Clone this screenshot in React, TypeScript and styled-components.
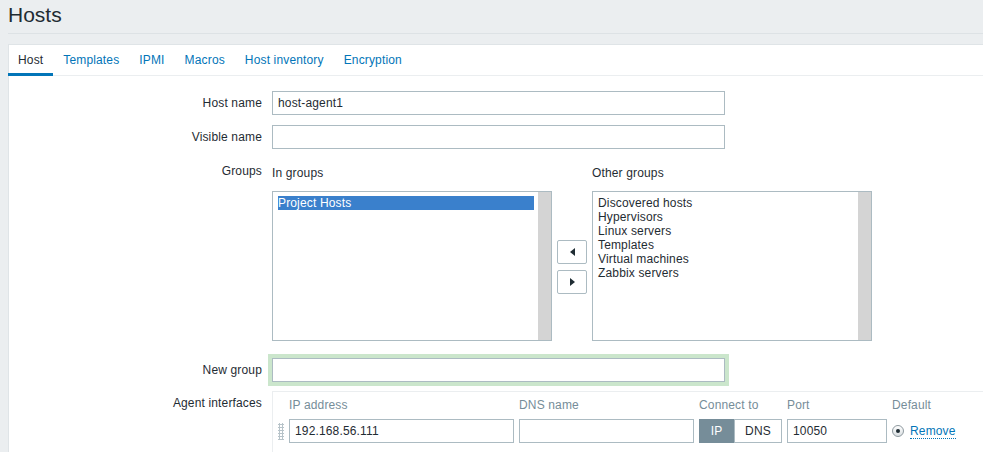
import React from "react";
import styled, { createGlobalStyle } from "styled-components";

const Global = createGlobalStyle`
  body {
    margin: 0;
    background: #ebeef0;
    font-family: "Liberation Sans", Arial, sans-serif;
    font-size: 12px;
    letter-spacing: 0.15px;
    color: #1f2c33;
    overflow: hidden;
  }
`;

const Page = styled.div`
  width: 1200px;
  padding-left: 8px;
`;

const Header = styled.h1`
  margin: 0;
  height: 33px;
  border-bottom: 1px solid #dde2e5;
  font-size: 21px;
  font-weight: normal;
  letter-spacing: 0;
  line-height: 29px;
`;

const Panel = styled.div`
  margin-top: 10px;
  background: #fff;
  border: 1px solid #dfe4e7;
  min-height: 500px;
`;

const TabBar = styled.ul`
  list-style: none;
  margin: 0 0 0 -1px;
  padding: 0;
  display: flex;
  height: 30px;
  border-bottom: 1px solid #ebeef0;
`;

const Tab = styled.li<{ $active?: boolean }>`
  box-sizing: border-box;
  height: 31px;
  margin-bottom: -1px;
  padding: 2px 10px 0;
  line-height: 26px;
  border-bottom: 3px solid ${(p) => (p.$active ? "#0275b8" : "transparent")};
  color: ${(p) => (p.$active ? "#1f2c33" : "#0275b8")};
`;

const Form = styled.div`
  padding-top: 15px;
`;

const Row = styled.div<{ $top?: number }>`
  display: grid;
  grid-template-columns: 253px 1fr;
  column-gap: 10px;
  margin-top: ${(p) => p.$top ?? 10}px;
`;

const Label = styled.div`
  text-align: right;
  line-height: 24px;
`;

const TextInput = styled.div<{ $width: number; $glow?: boolean }>`
  box-sizing: border-box;
  width: ${(p) => p.$width}px;
  height: 24px;
  border: 1px solid #acbbc2;
  padding: 0 5px;
  line-height: 22px;
  background: #fff;
  white-space: nowrap;
  box-shadow: ${(p) => (p.$glow ? "0 0 0 4px #cbe6cc" : "none")};
`;

const Groups = styled.div`
  display: grid;
  grid-template-columns: 280px 30px 280px;
  grid-template-rows: 32px 150px;
  column-gap: 5px;
`;

const ListHeader = styled.div<{ $col: number }>`
  grid-column: ${(p) => p.$col};
  padding-top: 7px;
  line-height: 14px;
`;

const ListBox = styled.div<{ $col: number }>`
  grid-column: ${(p) => p.$col};
  grid-row: 2;
  box-sizing: border-box;
  display: flex;
  border: 1px solid #acbbc2;
`;

const ListBody = styled.div`
  flex: 1;
  padding: 4px 4px 4px 5px;
`;

const Scrollbar = styled.div`
  width: 13px;
  background: #d4d4d4;
`;

const Option = styled.div<{ $selected?: boolean }>`
  line-height: 14px;
  white-space: nowrap;
  background: ${(p) => (p.$selected ? "#3a80cc" : "transparent")};
  color: ${(p) => (p.$selected ? "#fff" : "#1f2c33")};
`;

const ArrowStack = styled.div`
  grid-column: 2;
  grid-row: 2;
  display: flex;
  flex-direction: column;
  justify-content: center;
  gap: 6px;
  padding-top: 2px;
`;

const ArrowButton = styled.div`
  box-sizing: border-box;
  width: 30px;
  height: 24px;
  border: 1px solid #acbbc2;
  border-radius: 2px;
  background: #fff;
  display: flex;
  align-items: center;
  justify-content: center;
`;

const Triangle = styled.span<{ $dir: "left" | "right" }>`
  width: 0;
  height: 0;
  border-top: 4px solid transparent;
  border-bottom: 4px solid transparent;
  ${(p) =>
    p.$dir === "left"
      ? "border-right: 5px solid #1f2c33;"
      : "border-left: 5px solid #1f2c33;"}
`;

const InterfaceTable = styled.div`
  display: grid;
  grid-template-columns: 6px 225px 175px 83px 100px auto;
  column-gap: 5px;
  row-gap: 5px;
  align-items: center;
  padding: 5px 0 10px 5px;
  border-top: 1px solid #ebeef0;
  border-left: 1px solid #ebeef0;
`;

const ColHead = styled.div`
  line-height: 17px;
  color: #768d99;
  white-space: nowrap;
`;

const DragHandle = styled.span`
  width: 6px;
  height: 17px;
  background-image: radial-gradient(circle, #b7c3c9 1px, transparent 1.1px);
  background-size: 3px 3px;
`;

const Toggle = styled.div`
  display: flex;
  height: 24px;
`;

const Segment = styled.div<{ $on?: boolean; $width: number }>`
  box-sizing: border-box;
  width: ${(p) => p.$width}px;
  line-height: 22px;
  text-align: center;
  border: 1px solid ${(p) => (p.$on ? "#768d99" : "#acbbc2")};
  background: ${(p) => (p.$on ? "#768d99" : "#fff")};
  color: ${(p) => (p.$on ? "#fff" : "#1f2c33")};
`;

const DefaultCell = styled.div`
  display: flex;
  align-items: center;
  gap: 6px;
`;

const Radio = styled.span`
  box-sizing: border-box;
  width: 12px;
  height: 12px;
  border-radius: 50%;
  border: 1px solid #8e999f;
  background: linear-gradient(#ffffff, #d9dee1);
  display: flex;
  align-items: center;
  justify-content: center;
  &::after {
    content: "";
    width: 4px;
    height: 4px;
    border-radius: 50%;
    background: #1f2c33;
  }
`;

const RemoveLink = styled.span`
  color: #0275b8;
  line-height: 14px;
  border-bottom: 1px dotted #0275b8;
`;

const tabs = ["Host", "Templates", "IPMI", "Macros", "Host inventory", "Encryption"];
const otherGroups = [
  "Discovered hosts",
  "Hypervisors",
  "Linux servers",
  "Templates",
  "Virtual machines",
  "Zabbix servers",
];

export default function App() {
  return (
    <Page>
      <Global />
      <Header>Hosts</Header>
      <Panel>
        <TabBar>
          {tabs.map((t, i) => (
            <Tab key={t} $active={i === 0}>
              {t}
            </Tab>
          ))}
        </TabBar>
        <Form>
          <Row $top={0}>
            <Label>Host name</Label>
            <TextInput $width={453}>host-agent1</TextInput>
          </Row>
          <Row>
            <Label>Visible name</Label>
            <TextInput $width={453} />
          </Row>
          <Row>
            <Label>Groups</Label>
            <Groups>
              <ListHeader $col={1}>In groups</ListHeader>
              <ListHeader $col={3}>Other groups</ListHeader>
              <ListBox $col={1}>
                <ListBody>
                  <Option $selected>Project Hosts</Option>
                </ListBody>
                <Scrollbar />
              </ListBox>
              <ArrowStack>
                <ArrowButton>
                  <Triangle $dir="left" />
                </ArrowButton>
                <ArrowButton>
                  <Triangle $dir="right" />
                </ArrowButton>
              </ArrowStack>
              <ListBox $col={3}>
                <ListBody>
                  {otherGroups.map((g) => (
                    <Option key={g}>{g}</Option>
                  ))}
                </ListBody>
                <Scrollbar />
              </ListBox>
            </Groups>
          </Row>
          <Row $top={17}>
            <Label>New group</Label>
            <TextInput $width={453} $glow />
          </Row>
          <Row $top={9}>
            <Label>Agent interfaces</Label>
            <InterfaceTable>
              <span />
              <ColHead>IP address</ColHead>
              <ColHead>DNS name</ColHead>
              <ColHead>Connect to</ColHead>
              <ColHead>Port</ColHead>
              <ColHead>Default</ColHead>
              <DragHandle />
              <TextInput $width={225}>192.168.56.111</TextInput>
              <TextInput $width={175} />
              <Toggle>
                <Segment $on $width={35}>IP</Segment>
                <Segment $width={48}>DNS</Segment>
              </Toggle>
              <TextInput $width={100}>10050</TextInput>
              <DefaultCell>
                <Radio />
                <RemoveLink>Remove</RemoveLink>
              </DefaultCell>
            </InterfaceTable>
          </Row>
        </Form>
      </Panel>
    </Page>
  );
}
